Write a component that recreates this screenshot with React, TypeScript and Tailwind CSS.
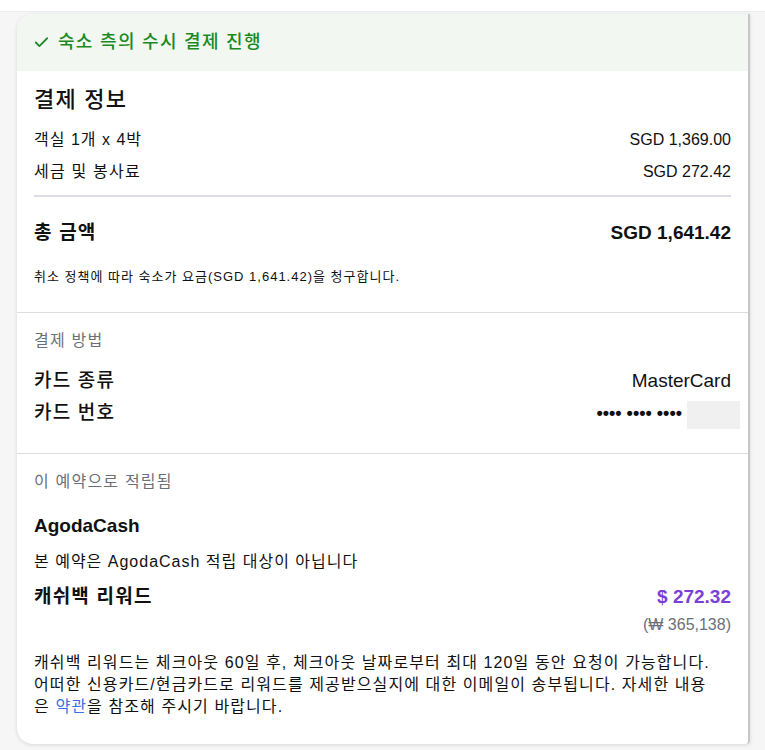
import { Check } from "lucide-react";

const font = { fontFamily: '"Liberation Sans", "Noto Sans CJK KR", sans-serif' };

export default function App() {
  return (
    <div className="h-[750px] w-[765px] bg-[#f6f6f7] overflow-hidden text-[#111]" style={font}>
      <div className="h-[12px] bg-white border-b border-[#ececef]" />
      <div className="pl-[17px] pt-[2px]">
        <div className="w-[733px] bg-white rounded-l-[16px] rounded-br-[4px] shadow-[0_1px_4px_rgba(0,0,0,0.12)] border-r-2 border-[#c5c7cb] overflow-hidden">
          {/* Header */}
          <div className="h-[57px] bg-[#f2f8f1] flex items-center pl-[16px] gap-[8px]">
            <Check className="w-[17px] h-[17px] text-[#1c8a26]" strokeWidth={2.5} />
            <span className="text-[18px] text-[#1a8a22] font-medium tracking-[1.3px]">숙소 측의 수시 결제 진행</span>
          </div>

          {/* Payment info */}
          <div className="px-[17px] pt-[14px] pb-[26px] border-b border-[#dcdde0]">
            <h2 className="text-[22px] font-medium leading-[30px] tracking-[1.2px]">결제 정보</h2>
            <div className="flex justify-between text-[16px] leading-[24px] mt-[13px]">
              <span className="tracking-[1px]">객실 1개 x 4박</span>
              <span>SGD 1,369.00</span>
            </div>
            <div className="flex justify-between text-[16px] leading-[24px] mt-[8px]">
              <span className="tracking-[1.2px]">세금 및 봉사료</span>
              <span>SGD 272.42</span>
            </div>
            <div className="h-[2px] bg-[#dcdde0] mt-[11px]" />
            <div className="flex justify-between items-center text-[19px] font-bold mt-[22px] leading-[28px]">
              <span className="tracking-[1.2px]">총 금액</span>
              <span>SGD 1,641.42</span>
            </div>
            <p className="text-[13px] leading-[18px] mt-[21px] tracking-[1px]">
              취소 정책에 따라 숙소가 요금(SGD 1,641.42)을 청구합니다.
            </p>
          </div>

          {/* Payment method */}
          <div className="px-[17px] pt-[16px] pb-[24px] border-b border-[#dcdde0]">
            <div className="text-[16px] text-[#6b7078] leading-[24px] tracking-[1.2px]">결제 방법</div>
            <div className="flex justify-between text-[19px] leading-[28px] mt-[14px]">
              <span className="font-medium tracking-[1.2px]">카드 종류</span>
              <span>MasterCard</span>
            </div>
            <div className="flex justify-between items-start text-[19px] leading-[28px] mt-[4px]">
              <span className="font-medium tracking-[1.2px]">카드 번호</span>
              <div className="flex items-start -mr-[9px]">
                <span className="text-[18px] font-bold leading-[28px]">•••• •••• ••••</span>
                <div className="w-[53px] h-[28px] bg-[#f0f0f0] ml-[5px] mt-[2px]" />
              </div>
            </div>
          </div>

          {/* Earned */}
          <div className="px-[17px] pt-[16px] pb-[26px]">
            <div className="text-[16px] text-[#6b7078] leading-[24px] tracking-[1.2px]">이 예약으로 적립됨</div>
            <div className="text-[19px] font-bold leading-[28px] mt-[18px]">AgodaCash</div>
            <div className="text-[16px] leading-[24px] mt-[10px] tracking-[1px]">본 예약은 AgodaCash 적립 대상이 아닙니다</div>
            <div className="flex justify-between items-start mt-[9px]">
              <span className="text-[19px] font-bold leading-[28px] tracking-[1.2px]">캐쉬백 리워드</span>
              <div className="flex flex-col items-end">
                <span className="text-[19px] font-bold text-[#7b3fd6] leading-[28px]">$ 272.32</span>
                <span className="text-[16px] text-[#6b7078] leading-[22px] mt-[3px]">(₩ 365,138)</span>
              </div>
            </div>
            <p className="text-[16px] leading-[22px] mt-[16px] tracking-[1.1px]">
              <span className="block whitespace-nowrap">
                캐쉬백 리워드는 체크아웃 60일 후, 체크아웃 날짜로부터 최대 120일 동안 요청이 가능합니다.
              </span>
              <span className="block whitespace-nowrap">
                어떠한 신용카드/현금카드로 리워드를 제공받으실지에 대한 이메일이 송부됩니다. 자세한 내용
              </span>
              <span className="block whitespace-nowrap">
                은 <span className="text-[#3b6fe0]">약관</span>을 참조해 주시기 바랍니다.
              </span>
            </p>
          </div>
        </div>
      </div>
    </div>
  );
}
